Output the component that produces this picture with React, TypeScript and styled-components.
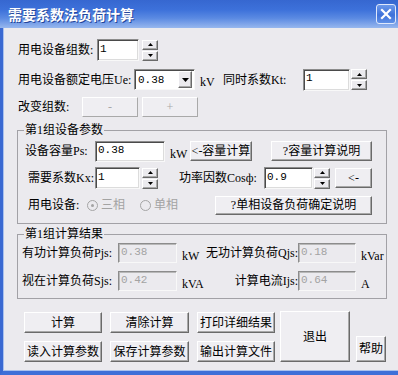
import styled, { createGlobalStyle } from 'styled-components';

const GlobalStyle = createGlobalStyle`
  html, body {
    margin: 0;
    padding: 0;
    background: #ffffff;
  }
  body {
    font-family: "Liberation Serif", "Noto Sans CJK SC", serif;
    font-size: 12px;
    color: #000;
  }
  * {
    box-sizing: border-box;
  }
`;

// Window chrome
const Window = styled.div`
  width: 398px;
  height: 375px;
  display: flex;
  flex-direction: column;
  overflow: hidden;
  background: #ebeaee;
`;

const TitleBar = styled.div`
  flex: none;
  height: 28px;
  display: flex;
  align-items: center;
  padding-left: 8px;
  background: linear-gradient(to bottom, #3667d0 0%, #3d71da 35%, #5b8ae2 65%, #97b7ee 100%);
`;

const Title = styled.span`
  flex: 1;
  color: #ffffff;
  font-family: "Noto Sans CJK SC", sans-serif;
  font-weight: 700;
  font-size: 14px;
  line-height: 16px;
  text-shadow: 1px 1px 0 #23459a;
`;

const CloseButton = styled.button`
  width: 20px;
  height: 20px;
  margin-right: 2px;
  padding: 0;
  display: flex;
  align-items: center;
  justify-content: center;
  border: 1px solid #dfe8fb;
  border-radius: 3px;
  background: linear-gradient(to bottom, #6b98ea, #3f72da 55%, #5f90e6);
`;

const Frame = styled.div`
  flex: 1;
  display: flex;
  flex-direction: column;
  border-left: 3px solid #3a69d2;
  border-bottom: 4px solid #3e6fd8;
  box-shadow: inset 1px 0 0 #a9c1ee, inset 0 -1px 0 #a9c1ee;
  padding-left: 14px;
`;

// Rows and text
const Row = styled.div<{ $mt?: number; $h?: number }>`
  display: flex;
  align-items: center;
  height: ${(p) => p.$h ?? 22}px;
  margin-top: ${(p) => p.$mt ?? 0}px;
`;

const Label = styled.span<{ $w: number; $pl?: number; $ml?: number; $right?: boolean }>`
  flex: none;
  width: ${(p) => p.$w}px;
  padding-left: ${(p) => p.$pl ?? 0}px;
  margin-left: ${(p) => p.$ml ?? 0}px;
  text-align: ${(p) => (p.$right ? 'right' : 'left')};
  white-space: nowrap;
  line-height: 14px;
`;

const Unit = styled.span<{ $w: number; $ml?: number }>`
  flex: none;
  width: ${(p) => p.$w}px;
  margin-left: ${(p) => p.$ml ?? 0}px;
  padding-top: 5px;
  white-space: nowrap;
  line-height: 14px;
`;

// Controls
const TextField = styled.input<{ $w: number; $h?: number; $off?: boolean }>`
  flex: none;
  width: ${(p) => p.$w}px;
  height: ${(p) => p.$h ?? 22}px;
  margin: 0;
  padding: 0 2px 3px 2px;
  font-family: "Liberation Mono", monospace;
  font-size: 11px;
  color: ${(p) => (p.$off ? '#a3a3a3' : '#000')};
  background: ${(p) => (p.$off ? '#ebeaee' : '#ffffff')};
  border: 1px solid;
  border-color: #8c8c8c #f8f8f8 #f8f8f8 #8c8c8c;
  box-shadow: ${(p) =>
    p.$off ? 'inset 1px 1px 0 #b8b8b8' : 'inset 1px 1px 0 #4a4a4a, inset -1px -1px 0 #dcdcdc'};
  outline: none;
`;

const Spin = styled.div<{ $ml?: number }>`
  flex: none;
  width: 16px;
  height: 21px;
  margin-left: ${(p) => p.$ml ?? 0}px;
  display: flex;
  flex-direction: column;
  gap: 1px;
`;

const SpinButton = styled.button`
  flex: 1;
  padding: 0;
  display: flex;
  align-items: center;
  justify-content: center;
  background: #ebeaee;
  border: 1px solid;
  border-color: #ffffff #6a6a6a #6a6a6a #ffffff;
  box-shadow: inset -1px -1px 0 #a8a8a8;
`;

const Combo = styled.div`
  flex: none;
  width: 61px;
  height: 21px;
  display: flex;
  align-items: center;
  padding: 1px 2px 1px 3px;
  background: #ffffff;
  border: 1px solid;
  border-color: #8c8c8c #f8f8f8 #f8f8f8 #8c8c8c;
  box-shadow: inset 1px 1px 0 #4a4a4a;
`;

const ComboValue = styled.span`
  flex: 1;
  font-family: "Liberation Mono", monospace;
  font-size: 11px;
  line-height: 14px;
`;

const ComboArrow = styled.span`
  flex: none;
  width: 14px;
  height: 17px;
  display: flex;
  align-items: center;
  justify-content: center;
  background: #ebeaee;
  border: 1px solid;
  border-color: #ffffff #6a6a6a #6a6a6a #ffffff;
  box-shadow: inset -1px -1px 0 #a8a8a8;
`;

const Button = styled.button<{ $w: number; $h?: number; $ml?: string; $self?: string }>`
  flex: none;
  width: ${(p) => p.$w}px;
  height: ${(p) => p.$h ?? 20}px;
  margin: 0 0 0 ${(p) => p.$ml ?? '0'};
  align-self: ${(p) => p.$self ?? 'auto'};
  padding: 0;
  font-family: "Liberation Serif", "Noto Sans CJK SC", serif;
  font-size: 12px;
  line-height: 14px;
  color: #000;
  white-space: nowrap;
  background: #efeef2;
  border: 1px solid;
  border-color: #ffffff #6a6a6a #6a6a6a #ffffff;
  box-shadow: inset -1px -1px 0 #a8a8a8;

  &:disabled {
    color: #a8a8a8;
    border-color: #ffffff #a9a9a9 #a9a9a9 #ffffff;
    box-shadow: none;
  }
`;

const RadioOption = styled.label<{ $w: number; $ml?: number }>`
  flex: none;
  width: ${(p) => p.$w}px;
  margin-left: ${(p) => p.$ml ?? 0}px;
  display: flex;
  align-items: center;
  gap: 3px;
  color: #a3a3a3;
  line-height: 14px;
`;

const RadioCircle = styled.span`
  width: 11px;
  height: 11px;
  border-radius: 50%;
  display: flex;
  align-items: center;
  justify-content: center;
  background: #ebeaee;
  border: 1px solid #a5a5a5;
`;

const RadioDot = styled.span`
  width: 3px;
  height: 3px;
  border-radius: 50%;
  background: #a3a3a3;
`;

// Group boxes
const GroupBox = styled.fieldset<{ $mt: number; $pt: number; $pb: number; $pl: number }>`
  width: 370px;
  margin: ${(p) => p.$mt}px 0 0 0;
  padding: ${(p) => p.$pt}px 14px ${(p) => p.$pb}px ${(p) => p.$pl}px;
  border: 1px solid #a2a1a6;
  min-inline-size: auto;
`;

const Legend = styled.legend<{ $ml: number }>`
  margin-left: ${(p) => p.$ml}px;
  padding: 0 1px;
  font-size: 12px;
  line-height: 14px;
`;

// Footer
const Footer = styled.div`
  display: flex;
  align-items: flex-start;
  margin-top: 12px;
  padding-left: 7px;
`;

const FooterGrid = styled.div`
  display: grid;
  grid-template-columns: 78px 79px 78px;
  grid-auto-rows: 21px;
  column-gap: 8px;
  row-gap: 8px;
  margin-top: 1px;
`;

const SmallArrow = ({ up }: { up?: boolean }) => (
  <svg width="5" height="3" viewBox="0 0 5 3">
    <polygon points={up ? '2.5,0 5,3 0,3' : '0,0 5,0 2.5,3'} fill="#000" />
  </svg>
);

const Spinner = ({ ml }: { ml?: number }) => (
  <Spin $ml={ml}>
    <SpinButton>
      <SmallArrow up />
    </SpinButton>
    <SpinButton>
      <SmallArrow />
    </SpinButton>
  </Spin>
);

export default function App() {
  return (
    <>
      <GlobalStyle />
      <Window>
        <TitleBar>
          <Title>需要系数法负荷计算</Title>
          <CloseButton aria-label="关闭">
            <svg width="12" height="12" viewBox="0 0 12 12">
              <path d="M2 2 L10 10 M10 2 L2 10" stroke="#fff" strokeWidth="2.2" strokeLinecap="square" />
            </svg>
          </CloseButton>
        </TitleBar>

        <Frame>
          <Row $mt={11}>
            <Label $w={80} $pl={1}>用电设备组数:</Label>
            <TextField $w={42} defaultValue="1" />
            <Spinner ml={3} />
          </Row>

          <Row $mt={7} $h={23}>
            <Label $w={117} $pl={1}>用电设备额定电压Ue:</Label>
            <Combo>
              <ComboValue>0.38</ComboValue>
              <ComboArrow>
                <svg width="7" height="4" viewBox="0 0 7 4">
                  <polygon points="0,0 7,0 3.5,4" fill="#000" />
                </svg>
              </ComboArrow>
            </Combo>
            <Unit $w={20} $ml={5}>kV</Unit>
            <Label $w={80} $ml={3}>同时系数Kt:</Label>
            <TextField $w={47} defaultValue="1" />
            <Spinner ml={1} />
          </Row>

          <Row $mt={6} $h={20}>
            <Label $w={65} $pl={1}>改变组数:</Label>
            <Button $w={56} $h={20} disabled>-</Button>
            <Button $w={56} $h={20} $ml="4px" disabled>+</Button>
          </Row>

          <GroupBox $mt={6} $pt={3} $pb={8} $pl={7}>
            <Legend $ml={-1}>第1组设备参数</Legend>
            <Row>
              <Label $w={70}>设备容量Ps:</Label>
              <TextField $w={70} $h={21} defaultValue="0.38" />
              <Unit $w={20} $ml={5}>kW</Unit>
              <Button $w={62}>&lt;-容量计算</Button>
              <Button $w={101} $ml="auto">?容量计算说明</Button>
            </Row>
            <Row $mt={5}>
              <Label $w={70} $pl={3}>需要系数Kx:</Label>
              <TextField $w={45} defaultValue="1" />
              <Spinner ml={2} />
              <Label $w={85} $ml={21}>功率因数Cosф:</Label>
              <TextField $w={49} defaultValue="0.9" />
              <Spinner ml={1} />
              <Button $w={37} $ml="auto">&lt;-</Button>
            </Row>
            <Row $mt={6} $h={20}>
              <Label $w={61} $pl={3}>用电设备:</Label>
              <RadioOption $w={53} $ml={1}>
                <RadioCircle>
                  <RadioDot />
                </RadioCircle>
                三相
              </RadioOption>
              <RadioOption $w={60}>
                <RadioCircle />
                单相
              </RadioOption>
              <Button $w={157} $h={19} $ml="auto">?单相设备负荷确定说明</Button>
            </Row>
          </GroupBox>

          <GroupBox $mt={3} $pt={2} $pb={7} $pl={4}>
            <Legend $ml={2}>第1组计算结果</Legend>
            <Row $h={20}>
              <Label $w={96}>有功计算负荷Pjs:</Label>
              <TextField $w={59} $h={20} $off readOnly value="0.38" />
              <Unit $w={19} $ml={5}>kW</Unit>
              <Label $w={97} $right>无功计算负荷Qjs:</Label>
              <TextField $w={58} $h={20} $off readOnly value="0.18" />
              <Unit $w={28} $ml={5}>kVar</Unit>
            </Row>
            <Row $mt={8} $h={20}>
              <Label $w={96}>视在计算负荷Sjs:</Label>
              <TextField $w={59} $h={20} $off readOnly value="0.42" />
              <Unit $w={19} $ml={5}>kVA</Unit>
              <Label $w={97} $right>计算电流Ijs:</Label>
              <TextField $w={58} $h={20} $off readOnly value="0.64" />
              <Unit $w={20} $ml={5}>A</Unit>
            </Row>
          </GroupBox>

          <Footer>
            <FooterGrid>
              <Button $w={78} $h={21}>计算</Button>
              <Button $w={79} $h={21}>清除计算</Button>
              <Button $w={78} $h={21}>打印详细结果</Button>
              <Button $w={78} $h={21}>读入计算参数</Button>
              <Button $w={79} $h={21}>保存计算参数</Button>
              <Button $w={78} $h={21}>输出计算文件</Button>
            </FooterGrid>
            <Button $w={70} $h={51} $ml="5px">退出</Button>
            <Button $w={30} $h={26} $ml="6px" $self="flex-end">帮助</Button>
          </Footer>
        </Frame>
      </Window>
    </>
  );
}
